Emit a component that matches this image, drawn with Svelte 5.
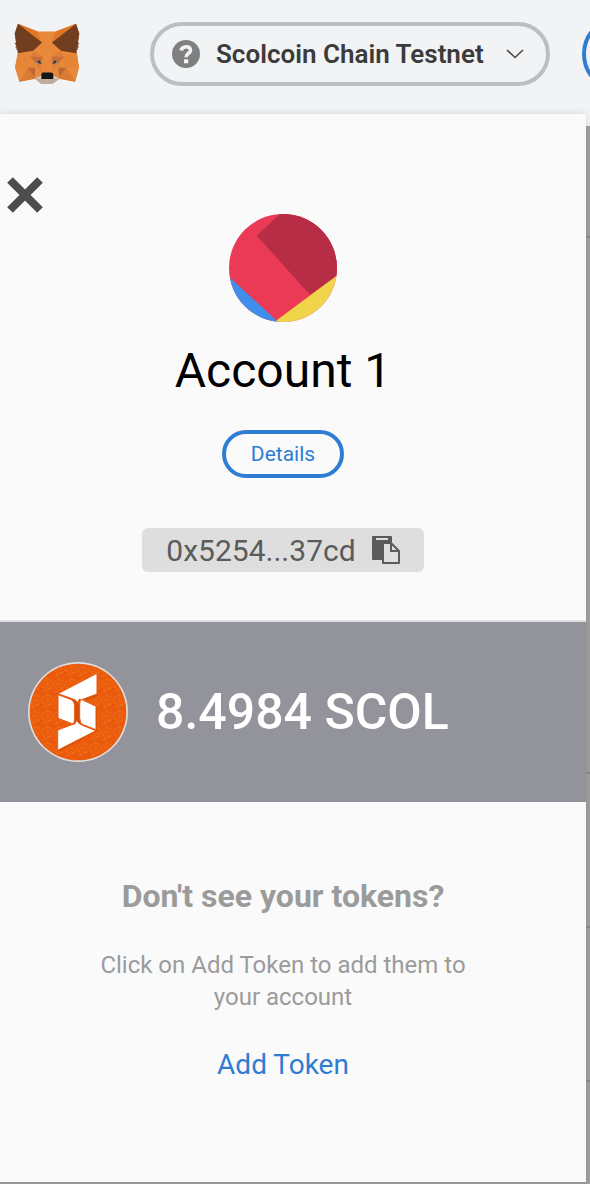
<script>
  const account = { name: 'Account 1', address: '0x5254...37cd' };
  const network = 'Scolcoin Chain Testnet';
  const balance = '8.4984 SCOL';
</script>

<div class="page">
  <header>
    <svg class="fox" viewBox="40 38 200 188" role="img" aria-label="MetaMask">
      <path fill="#e8883a" d="M52 40L112 64H166L228 40L238 70L230 122L237 174L226 216L178 207L156 223H123L103 207L56 216L43 174L51 130L42 70Z" />
      <path fill="#d97b35" d="M82 174H104L103 207L56 216ZM198 174H174L178 207L226 216Z" />
      <path fill="#e68536" d="M43 174L52 130L88 140L82 174ZM237 174L230 130L192 140L198 174Z" />
      <path fill="#e27625" d="M52 40L112 64L123 96ZM228 40L166 64L155 96Z" />
      <path fill="#713f20" d="M52 40L125 97L98 122L52 130L50 118L47 120L48 112L44 112L47 105L42 102L46 96L42 70ZM228 40L155 97L182 122L229 130L230 118L234 120L232 112L237 112L233 105L238 102L234 96L238 70Z" />
      <path fill="#d87a36" d="M99 122L126 140L121 184L88 140ZM181 122L154 140L159 184L192 140Z" opacity=".6" />
      <path fill="#c96e3b" d="M88 140H126L124 161L103 154ZM192 140H154L156 161L177 154Z" />
      <path fill="#bd6835" d="M82 174H104L102 202ZM198 174H174L178 202Z" />
      <path fill="#bfaea0" d="M103 206L123 197L125 208H156L158 197L178 206L156 223H123Z" />
      <path fill="#d9c7b6" d="M103 206L123 197L122 208ZM178 206L158 197L159 208Z" />
      <path fill="#263b55" d="M103 157L118 151L123 162ZM176 157L162 151L157 162Z" />
      <path fill="#a9a29b" d="M103 157L111 155L113 159ZM176 157L168 155L166 159Z" />
      <path fill="#161616" d="M126 188H154L159 193V208H123V193Z" />
    </svg>
    <button class="network" type="button">
      <svg class="help" viewBox="0 0 28 28" aria-hidden="true">
        <circle cx="14" cy="14" r="14" fill="#7f8082" />
        <path d="M9 10.5C10.200 5.600 18.500 5.400 18.500 10.200C18.500 13.500 14 13.400 14 17.200" fill="none" stroke="#f2f3f4" stroke-width="3.600" />
        <rect x="12" y="19.300" width="4.200" height="4" fill="#f2f3f4" />
      </svg>
      <span>{network}</span>
      <svg class="chevron" viewBox="0 0 18 10" aria-hidden="true">
        <path d="M1 1L9 8.500L17 1" fill="none" stroke="#4a4a4a" stroke-width="1.600" />
      </svg>
    </button>
    <button class="avatar-button" type="button" aria-label="Accounts"></button>
  </header>

  <div class="stage">
    <div class="backdrop" aria-hidden="true">
      <div class="short"></div>
      <div class="tall"></div>
      <div></div>
      <div></div>
      <div class="rest"></div>
    </div>
    <main>
      <section class="account">
        <button class="close" type="button" aria-label="Close">
          <svg viewBox="0 0 36 36" aria-hidden="true">
            <path d="M3 3L33 33M33 3L3 33" stroke="#4d4d4d" stroke-width="8" />
          </svg>
        </button>
        <svg class="identicon" viewBox="30 27 324 324" aria-hidden="true">
          <clipPath id="face"><circle cx="192" cy="189" r="162" /></clipPath>
          <g clip-path="url(#face)">
            <rect x="30" y="27" width="324" height="324" fill="#ea3a56" />
            <path fill="#b72d46" d="M190 20L113 92L273 269L360 207V20Z" />
            <path fill="#f0d449" d="M170 348L360 207V360H170Z" />
            <path fill="#3f8eec" d="M20 206L174 348V360H20Z" />
          </g>
        </svg>
        <h1>{account.name}</h1>
        <button class="details" type="button">Details</button>
        <button class="address" type="button" aria-label="Copy address {account.address}">
          <span>{account.address}</span>
          <svg viewBox="0 0 28 28" aria-hidden="true">
            <path fill="#5b5b5b" fill-rule="evenodd" d="M1 0H19Q20 0 20 1V6H12Q10 6 10 8V24H1Q0 24 0 23V1Q0 0 1 0ZM4 2V4H16V2Z" />
            <path fill="#dedede" stroke="#5b5b5b" stroke-width="2" stroke-linejoin="round" d="M11 7H19L27 15V27H11Z" />
            <path fill="none" stroke="#5b5b5b" stroke-width="2" d="M19 7V15H27" />
          </svg>
        </button>
      </section>

      <section class="balance">
        <svg class="coin" viewBox="39 36 300 300" aria-hidden="true">
          <defs>
            <pattern id="weave" width="36" height="48" patternUnits="userSpaceOnUse" patternTransform="translate(40 36)">
              <path d="M3 12L21 3V12L11 19V30L3 27V12M21 16L31 20V34L21 30ZM3 44L31 30M21 3L36 12M11 30L20 48M31 0V9" fill="none" stroke="#ee7612" stroke-width="2" />
            </pattern>
          </defs>
          <circle cx="189" cy="186" r="150" fill="#dedede" />
          <circle cx="189" cy="186" r="145" fill="#ea580e" />
          <circle cx="189" cy="186" r="144" fill="url(#weave)" />
          <path fill="#c84909" opacity=".65" d="M136 137L249 78V137L200 157L246 174V244L134 305V241L180 223L136 207Z" />
          <g fill="#fff" stroke="#ea580e" stroke-width="3" stroke-linejoin="round">
            <path d="M129 131L246 70V132L198 150Q193 143 191 152L188 158Q182 148 168 145Z" />
            <path d="M129 134L164 147Q178 151 179 168V204Q179 218 174 222L129 205Z" />
            <path d="M243 169L199 148Q194 150 194 165V203Q194 219 204 224L243 239Z" />
            <path d="M128 301V240L174 223Q181 225 185 210Q190 223 205 227L243 242Z" />
          </g>
        </svg>
        <span>{balance}</span>
      </section>

      <section class="tokens">
        <h2>Don't see your tokens?</h2>
        <p>Click on Add Token to add them to your account</p>
        <a href="#add-token">Add Token</a>
      </section>
    </main>
  </div>
</div>

<style>
  :global(html), :global(body), :global(#app) {
    height: 100%;
  }
  :global(body) {
    margin: 0;
    background: #a0a0a0;
  }
  .page {
    display: flex;
    flex-direction: column;
    min-height: 100%;
    overflow: hidden;
    font-family: Roboto, sans-serif;
  }
  button {
    padding: 0;
    font-family: inherit;
    background: none;
    cursor: pointer;
    box-sizing: border-box;
  }
  svg {
    display: block;
    flex: none;
  }
  header {
    display: flex;
    align-items: center;
    height: 126px;
    padding: 0 0 18px 14px;
    box-sizing: border-box;
    background: #f2f3f4;
    overflow: hidden;
  }
  .fox {
    width: 66px;
    height: 62px;
  }
  .network {
    display: flex;
    flex: 1;
    align-items: center;
    height: 64px;
    margin: 0 32px 0 70px;
    padding: 0 22px 0 18px;
    border: 4px solid #bbbfc5;
    border-radius: 32px;
    color: #3b3b3b;
    font-size: 26px;
    font-weight: 600;
    line-height: 28px;
    white-space: nowrap;
  }
  .network span {
    margin: 0 auto 0 16px;
  }
  .help {
    width: 28px;
    height: 28px;
  }
  .chevron {
    width: 18px;
    height: 10px;
  }
  .avatar-button {
    flex: none;
    width: 76px;
    height: 76px;
    margin-right: -68px;
    border: 4px solid #2f7dd3;
    border-radius: 50%;
  }
  .stage {
    display: grid;
    flex: 1;
    margin-top: -12px;
  }
  .backdrop, main {
    grid-area: 1 / 1;
  }
  .backdrop {
    display: flex;
    flex-direction: column;
    margin-top: 12px;
    background: #a0a0a0;
  }
  .backdrop div {
    height: 152px;
    border-bottom: 2px solid #8b8b8b;
  }
  .backdrop .short {
    height: 110px;
  }
  .backdrop .tall {
    height: 534px;
  }
  .backdrop .rest {
    flex: 1;
    height: auto;
    border: 0;
  }
  main {
    display: flex;
    flex-direction: column;
    margin: 0 4px 2px 0;
    background: #fafafa;
    box-shadow: 0 0 8px rgba(0, 0, 0, 0.12);
  }
  .account {
    display: flex;
    flex-direction: column;
    align-items: center;
    padding: 62px 20px 48px 0;
    border-bottom: 2px solid #dedede;
  }
  .close {
    align-self: flex-start;
    margin-left: 7px;
    border: 0;
  }
  .close svg {
    width: 36px;
    height: 38px;
  }
  .identicon {
    width: 108px;
    height: 108px;
  }
  h1 {
    margin: 20px 0 30px;
    font-size: 48px;
    font-weight: 400;
    line-height: 58px;
  }
  .details {
    width: 122px;
    height: 48px;
    border: 4px solid #2f7dd3;
    border-radius: 24px;
    color: #2f7dd3;
    font-size: 21px;
  }
  .address {
    display: flex;
    align-items: center;
    gap: 16px;
    height: 44px;
    margin-top: 50px;
    padding: 0 24px;
    border: 0;
    border-radius: 6px;
    background: #dedede;
    color: #5b5b5b;
    font-size: 30px;
  }
  .address svg {
    width: 28px;
    height: 28px;
  }
  .balance {
    display: flex;
    align-items: center;
    gap: 28px;
    height: 180px;
    padding: 0 28px;
    background: #93939c;
    color: #fff;
    font-size: 50px;
    font-weight: 500;
    line-height: 60px;
  }
  .coin {
    width: 100px;
    height: 100px;
  }
  .tokens {
    display: flex;
    flex-direction: column;
    align-items: center;
    padding: 74px 100px 60px 80px;
    color: #9b9b9b;
    text-align: center;
  }
  h2 {
    margin: 0;
    font-size: 32px;
    font-weight: 700;
    line-height: 40px;
  }
  p {
    margin: 33px 0 32px;
    font-size: 24px;
    line-height: 32px;
  }
  .tokens a {
    color: #2f7dd3;
    font-size: 28px;
    line-height: 40px;
    text-decoration: none;
  }
</style>
